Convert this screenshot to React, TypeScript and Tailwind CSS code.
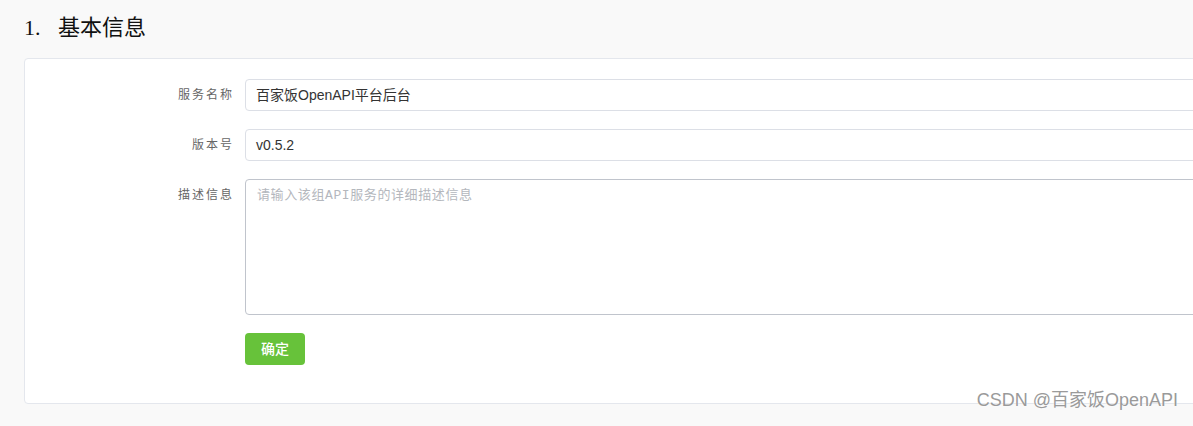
import React from "react";

const serif = { fontFamily: '"Liberation Serif", "Noto Sans CJK SC", serif' } as const;

function Label({ children, top }: { children: React.ReactNode; top?: boolean }) {
  return (
    <div
      className={`w-[220px] shrink-0 pr-[11px] text-right text-[12px] tracking-[2px] text-[#666] ${top ? "pt-[7px]" : "flex h-[32px] items-center justify-end"}`}
    >
      {children}
    </div>
  );
}

export default function App() {
  return (
    <div
      className="relative h-[426px] w-full overflow-hidden bg-[#f9f9f9]"
      style={{ fontFamily: '"Liberation Sans", "Noto Sans CJK SC", sans-serif' }}
    >
      <div className="flex h-[58px] items-center pl-[24px] pb-[4px] text-[22px] font-normal text-[#111]" style={serif}>
        <span className="w-[34px]">1.</span>
        <span>基本信息</span>
      </div>

      <div className="ml-[24px] mr-[-20px] rounded-[4px] border border-[#e4e7ed] bg-white pt-[20px] pb-[38px]">
        <div className="mb-[18px] flex">
          <Label>服务名称</Label>
          <div className="flex h-[32px] flex-1 items-center rounded-[4px] border border-[#dcdfe6] pl-[10px] text-[14px] text-[#333]">
            百家饭OpenAPI平台后台
          </div>
        </div>
        <div className="mb-[18px] flex">
          <Label>版本号</Label>
          <div className="flex h-[32px] flex-1 items-center rounded-[4px] border border-[#dcdfe6] pl-[10px] text-[14px] text-[#333]">
            v0.5.2
          </div>
        </div>
        <div className="mb-[18px] flex">
          <Label top>描述信息</Label>
          <div
            className="h-[136px] flex-1 rounded-[4px] border border-[#c0c4cc] pl-[11px] pt-[6px] text-[13px] tracking-[0.6px] text-[#b4b7bd]"
            style={{ fontFamily: '"Liberation Mono", "Noto Sans CJK SC", monospace' }}
          >
            请输入该组API服务的详细描述信息
          </div>
        </div>
        <div className="flex">
          <div className="w-[220px] shrink-0" />
          <button className="flex h-[32px] w-[60px] items-center justify-center rounded-[4px] bg-[#67c23a] text-[14px] font-medium text-white">
            确定
          </button>
        </div>
      </div>

      <div className="flex h-[58px] items-center pl-[24px] pt-[8px] text-[22px] font-normal text-[#111]" style={serif}>
        <span className="w-[34px]">2.</span>
        <span>服务鉴权</span>
      </div>

      <div className="absolute right-[15px] top-[387px] text-[18px] text-[#9a9a9a] [text-shadow:0_0_2px_#fff]">
        CSDN @百家饭OpenAPI
      </div>
    </div>
  );
}
